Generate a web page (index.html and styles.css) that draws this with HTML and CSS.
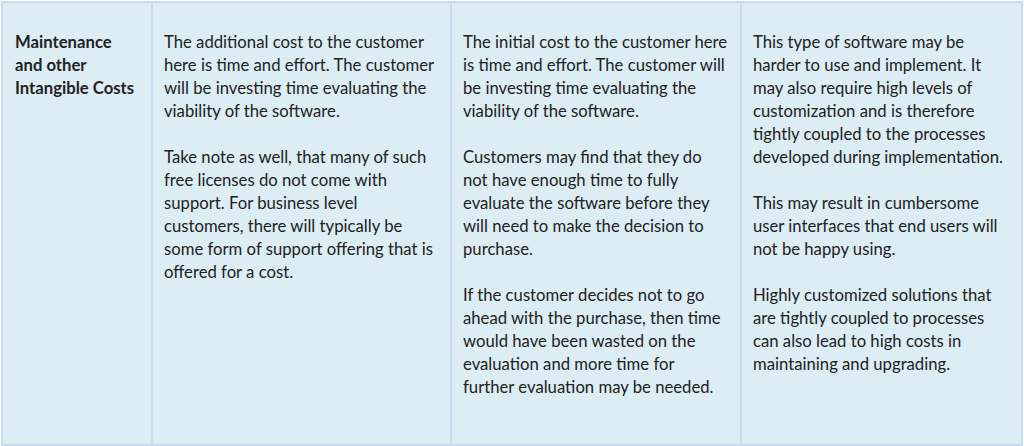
FILE: index.html
```html
<!DOCTYPE html>
<html>
<head>
<meta charset="utf-8">
<link rel="stylesheet" href="styles.css">
</head>
<body>
<table class="grid">
  <tr>
    <th class="label">Maintenance and other Intangible Costs</th>
    <td class="c2">
      <p>The additional cost to the customer here is time and effort. The customer will be investing time evaluating the viability of the software.</p>
      <p>Take note as well, that many of such free licenses do not come with support. For business level customers, there will typically be some form of support offering that is offered for a cost.</p>
    </td>
    <td class="c3">
      <p>The initial cost to the customer here is time and effort. The customer will be investing time evaluating the viability of the software.</p>
      <p>Customers may find that they do not have enough time to fully evaluate the software before they will need to make the decision to purchase.</p>
      <p>If the customer decides not to go ahead with the purchase, then time would have been wasted on the evaluation and more time for further evaluation may be needed.</p>
    </td>
    <td class="c4">
      <p>This type of software may be harder to use and implement. It may also require high levels of customization and is therefore tightly coupled to the processes developed during implementation.</p>
      <p>This may result in cumbersome user interfaces that end users will not be happy using.</p>
      <p>Highly customized solutions that are tightly coupled to processes can also lead to high costs in maintaining and upgrading.</p>
    </td>
  </tr>
</table>
</body>
</html>
```
FILE: styles.css
```css
html, body {
  margin: 0;
  padding: 0;
  background: #ffffff;
}
body {
  padding: 1px 0 0 1px;
  font-family: Lato, "Open Sans", sans-serif;
  color: #222222;
}
.grid {
  border-collapse: collapse;
  width: 1022px;
  height: 445px;
  background: #dcedf4;
  table-layout: fixed;
}
.grid th, .grid td {
  border: 2px solid #c8dbef;
  vertical-align: top;
  text-align: left;
  padding: 28px 12px 0 11px;
  font-size: 16.7px;
  line-height: 23px;
}
.grid .label {
  width: 124px;
  font-weight: 700;
  padding-left: 12px;
}
.grid .c2 { width: 274px; }
.grid .c3 { width: 265px; }
.grid p {
  margin: 0 0 23px 0;
}
.grid p:last-child { margin-bottom: 0; }
```
